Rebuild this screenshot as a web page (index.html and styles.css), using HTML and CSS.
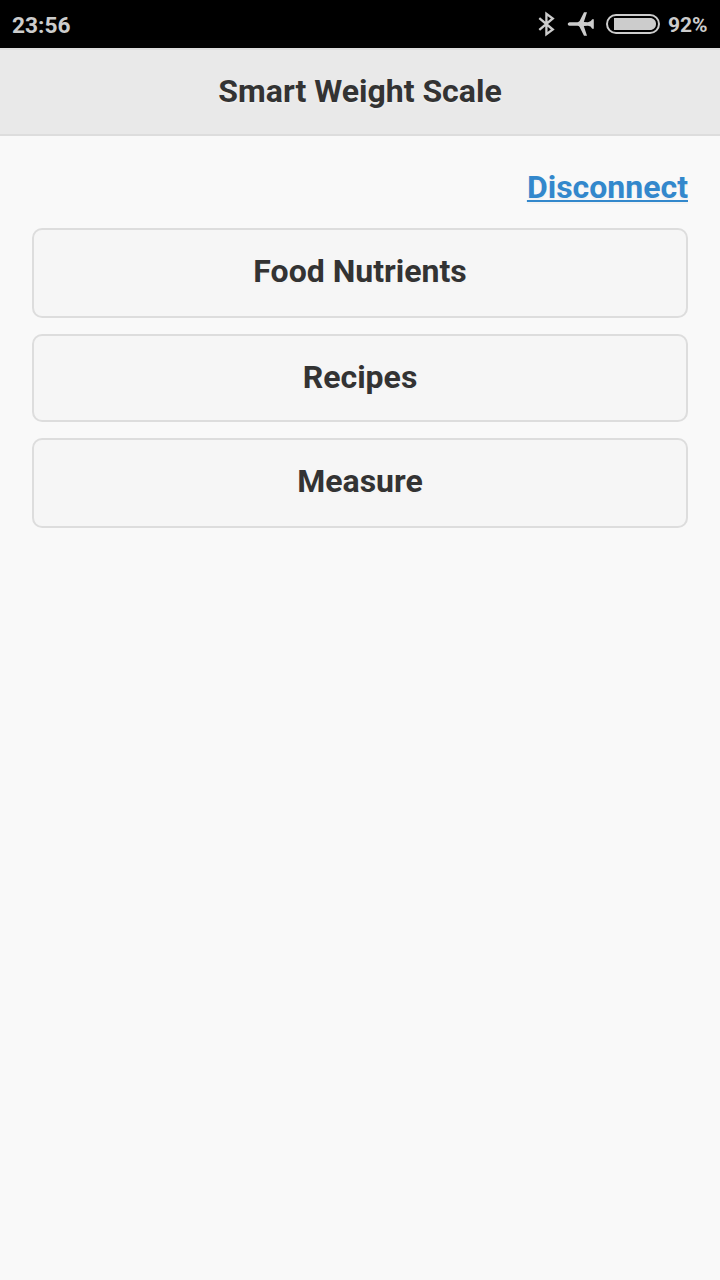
FILE: index.html
```html
<!DOCTYPE html>
<html lang="en">
<head>
<meta charset="utf-8">
<title>Smart Weight Scale</title>
<link rel="stylesheet" href="styles.css">
</head>
<body>
<div class="status-bar">
  <span class="clock">23:56</span>
  <svg class="bluetooth" width="18" height="26" viewBox="0 0 18 26"><path d="M1.300 7.200 14.800 18.500 8.400 23.200V2.800L14.800 7.500 1.300 18.800"/></svg>
  <svg class="plane" width="28" height="26" viewBox="0 0 28 26"><path d="M2.500 11.200H10.500Q11.800 11.100 12.600 10L17 1.300H20L16.800 11L21 11.200Q24 11 25.200 8.200H26.800V17.800H25.200Q24 15 21 14.800L16.800 15L20 24.700H17L12.600 16Q11.800 14.900 10.500 14.800H2.500Q.7 14.400 .7 13Q.7 11.600 2.500 11.200Z"/></svg>
  <svg class="battery" width="54" height="20" viewBox="0 0 54 20"><rect class="shell" x="1" y="1" width="52" height="18" rx="9"/><path class="level" d="M8 4H44C47.500 4 50 6.500 50 10S47.500 16 44 16H8Z"/></svg>
  <span class="percent">92%</span>
</div>
<header class="header"><h1 class="title">Smart Weight Scale</h1></header>
<main class="content">
  <a class="disconnect" href="#">Disconnect</a>
  <button class="btn">Food Nutrients</button>
  <button class="btn btn-short">Recipes</button>
  <button class="btn">Measure</button>
</main>
</body>
</html>
```
FILE: styles.css
```css
* {
  box-sizing: border-box;
}

body {
  margin: 0;
  min-height: 1280px;
  background: #f9f9f9;
  color: #333;
  font-family: Roboto, sans-serif;
}

.status-bar {
  display: flex;
  align-items: center;
  height: 48px;
  padding: 0 12px;
  background: #000;
  color: #ccc;
}

.clock {
  margin-right: auto;
  padding-top: 3px;
  font-size: 22.7px;
  font-weight: 700;
  line-height: 28px;
}

.bluetooth {
  margin-right: 11px;
  fill: none;
  stroke: #ccc;
  stroke-width: 2.3;
}

.plane {
  margin-right: 11px;
  fill: #ccc;
}

.battery {
  margin-right: 8px;
}

.shell {
  fill: none;
  stroke: #ccc;
  stroke-width: 2;
}

.level {
  fill: #ccc;
}

.percent {
  width: 40px;
  padding-top: 2px;
  font-size: 21px;
  font-weight: 700;
  line-height: 26px;
}

.header {
  height: 88px;
  padding-top: 21px;
  border-top: 2px solid #ddd;
  border-bottom: 2px solid #ddd;
  background: #e9e9e9;
}

.title {
  margin: 0;
  font-size: 32px;
  font-weight: 700;
  line-height: 40px;
  text-align: center;
  text-shadow: 0 2px 0 #eee;
}

.content {
  display: flex;
  flex-direction: column;
  padding: 31px 32px 32px;
}

.disconnect {
  align-self: flex-end;
  height: 61px;
  color: #38c;
  font-size: 32px;
  font-weight: 700;
  line-height: 40px;
  text-decoration-thickness: 2px;
  text-underline-offset: 2px;
  text-shadow: 0 2px 0 #f3f3f3;
}

.btn {
  height: 90px;
  margin: 0 0 16px;
  padding: 0 0 4px;
  border: 2px solid #ddd;
  border-radius: 10px;
  background: #f6f6f6;
  color: #333;
  font: 700 32px/40px Roboto, sans-serif;
  text-shadow: 0 2px 0 #f3f3f3;
}

.btn-short {
  height: 88px;
  padding-bottom: 2px;
}
```
